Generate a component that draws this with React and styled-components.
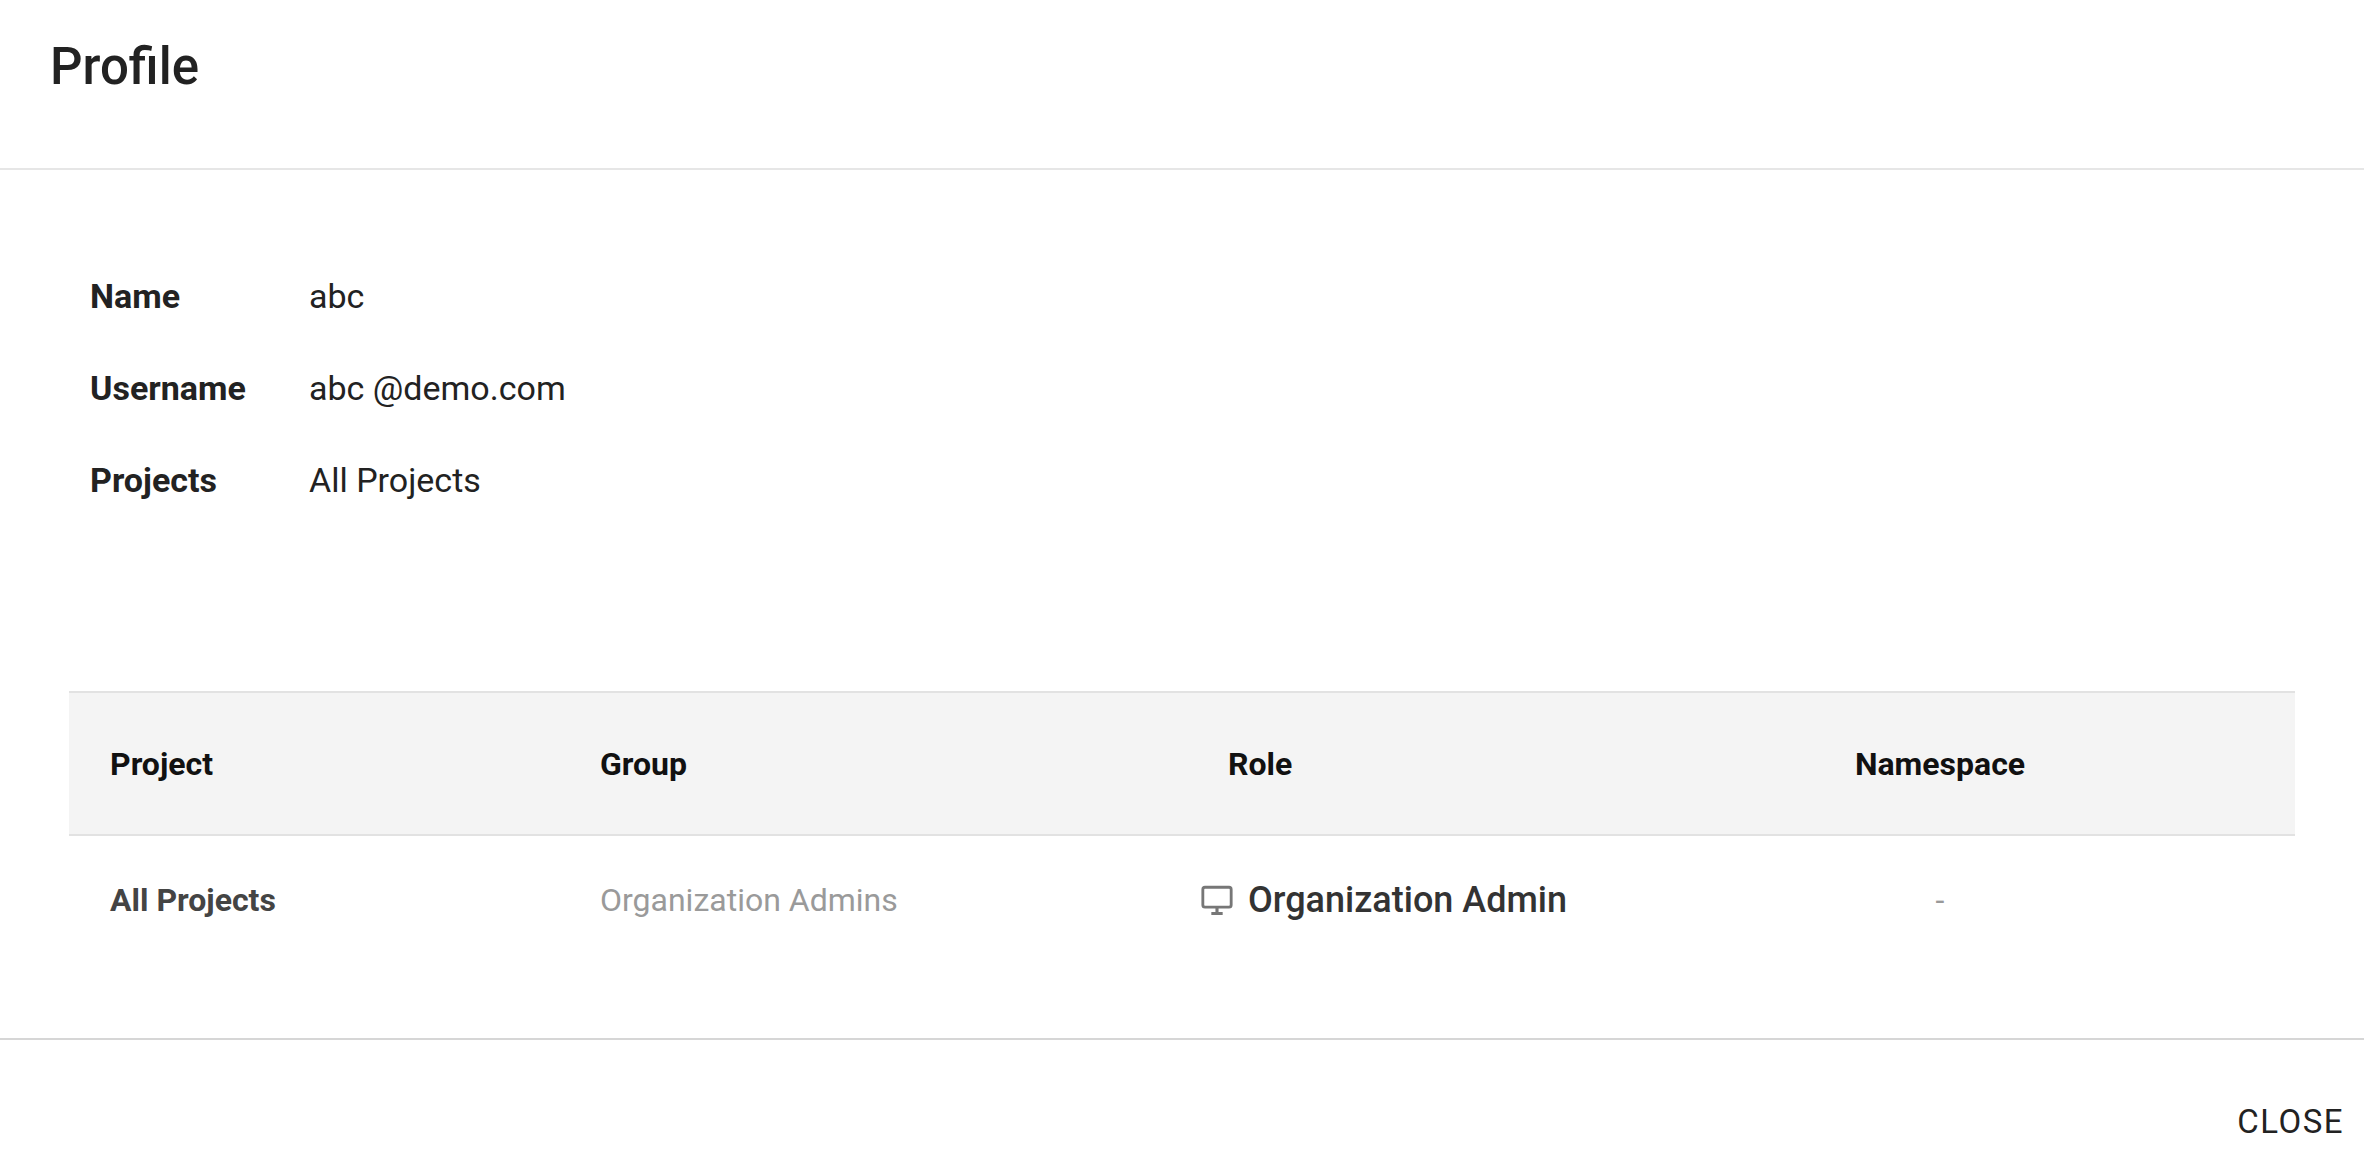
import React from "react";
import styled, { createGlobalStyle } from "styled-components";

const Global = createGlobalStyle`
  html, body { margin: 0; background: #fff; font-family: Roboto, "Liberation Sans", sans-serif; }
`;
const Page = styled.div`display:flex;flex-direction:column;height:1172px;`;
const Header = styled.header`
  height:170px;box-sizing:border-box;padding:0 50px;display:flex;align-items:center;
  border-bottom:2px solid #e6e6e6;
`;
const Title = styled.h1`margin:0;margin-top:-36px;font-size:51px;font-weight:500;color:#222;`;
const Body = styled.main`flex:1;padding:0 69px 0 69px;border-bottom:2px solid #d6d6d6;`;
const Info = styled.div`
  display:grid;grid-template-columns:219px 1fr;row-gap:56px;padding:0 21px;margin-top:108px;margin-bottom:193px;
  align-items:center;
`;
const Label = styled.div`font-size:34px;font-weight:700;color:#222;line-height:36px;`;
const Value = styled.div`font-size:34px;color:#222;line-height:36px;`;
const Table = styled.div`display:flex;flex-direction:column;`;
const Row = styled.div`
  display:grid;grid-template-columns:531px 600px 600px 280px 1fr;align-items:center;
  height:${p => p.$head ? 141 : 127}px;
  background:${p => p.$head ? "#f4f4f4" : "transparent"};
  border-top:${p => p.$head ? "2px solid #e2e2e2" : "none"};
  border-bottom:${p => p.$head ? "2px solid #e2e2e2" : "none"};
`;
const Cell = styled.div`
  padding-left:${p => p.$pl || 0}px;text-align:${p => p.$center ? "center" : "left"};
  font-size:${p => p.$size || 32}px;font-weight:${p => p.$w || 400};color:${p => p.$c || "#111"};
  display:flex;align-items:center;gap:14px;justify-content:${p => p.$center ? "center" : "flex-start"};
`;
const Footer = styled.footer`height:132px;display:flex;align-items:center;justify-content:flex-end;padding-right:20px;`;
const Close = styled.button`
  border:none;background:none;font-family:inherit;font-size:33px;letter-spacing:1.5px;color:#222;padding:10px 0;margin-top:30px;
`;

const Monitor = () => (
  <svg width="34" height="32" viewBox="0 0 24 22" fill="none" stroke="#777" strokeWidth="2">
    <rect x="2" y="2" width="20" height="14" rx="1.5" />
    <path d="M12 16v4M8 20.5h8" strokeWidth="2.2" />
  </svg>
);

export default function App() {
  return (
    <Page>
      <Global />
      <Header><Title>Profile</Title></Header>
      <Body>
        <Info>
          <Label>Name</Label><Value>abc</Value>
          <Label>Username</Label><Value>abc @demo.com</Value>
          <Label>Projects</Label><Value>All Projects</Value>
        </Info>
        <Table>
          <Row $head>
            <Cell $pl={41} $w={700}>Project</Cell>
            <Cell $w={700}>Group</Cell>
            <Cell $pl={28} $w={700}>Role</Cell>
            <Cell $center $w={700}>Namespace</Cell>
            <div />
          </Row>
          <Row>
            <Cell $pl={41} $w={700} $c="#444">All Projects</Cell>
            <Cell $c="#9a9a9a">Organization Admins</Cell>
            <Cell $size={36} $w={500} $c="#333"><Monitor />Organization Admin</Cell>
            <Cell $center $c="#999">-</Cell>
            <div />
          </Row>
        </Table>
      </Body>
      <Footer><Close>CLOSE</Close></Footer>
    </Page>
  );
}
